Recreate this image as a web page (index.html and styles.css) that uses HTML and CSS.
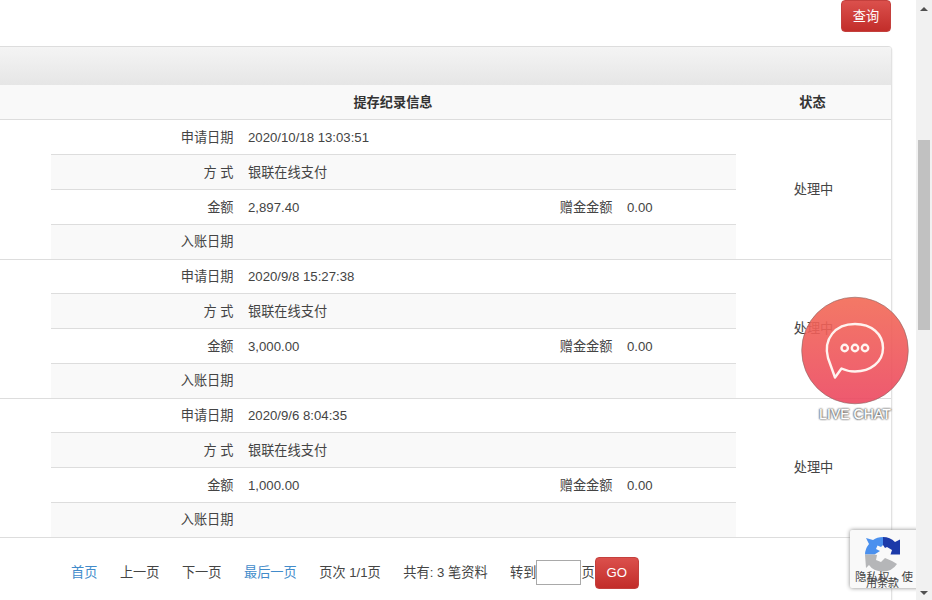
FILE: index.html
```html
<!DOCTYPE html>
<html lang="zh-CN">
<head>
<meta charset="utf-8">
<title>提存纪录</title>
<link rel="stylesheet" href="styles.css">
</head>
<body>
<div class="window">
  <main class="page">
    <div class="toolbar"><button class="btn query">查询</button></div>
    <section class="panel">
      <div class="panel-heading"></div>
      <div class="table-head"><span class="info-title">提存纪录信息</span><span class="status-title">状态</span></div>
      <div class="record">
        <div class="details">
          <div class="row"><span class="label">申请日期</span><span class="value">2020/10/18 13:03:51</span></div>
          <div class="row"><span class="label">方 式</span><span class="value">银联在线支付</span></div>
          <div class="row"><span class="label">金额</span><span class="value">2,897.40</span><span class="label bonus">赠金金额</span><span class="value amount">0.00</span></div>
          <div class="row"><span class="label">入账日期</span></div>
        </div>
        <div class="status">处理中</div>
      </div>
      <div class="record">
        <div class="details">
          <div class="row"><span class="label">申请日期</span><span class="value">2020/9/8 15:27:38</span></div>
          <div class="row"><span class="label">方 式</span><span class="value">银联在线支付</span></div>
          <div class="row"><span class="label">金额</span><span class="value">3,000.00</span><span class="label bonus">赠金金额</span><span class="value amount">0.00</span></div>
          <div class="row"><span class="label">入账日期</span></div>
        </div>
        <div class="status">处理中</div>
      </div>
      <div class="record">
        <div class="details">
          <div class="row"><span class="label">申请日期</span><span class="value">2020/9/6 8:04:35</span></div>
          <div class="row"><span class="label">方 式</span><span class="value">银联在线支付</span></div>
          <div class="row"><span class="label">金额</span><span class="value">1,000.00</span><span class="label bonus">赠金金额</span><span class="value amount">0.00</span></div>
          <div class="row"><span class="label">入账日期</span></div>
        </div>
        <div class="status">处理中</div>
      </div>
      <div class="pager">
        <a>首页</a><span>上一页</span><span>下一页</span><a>最后一页</a><span>页次 1/1页</span><span>共有: 3 笔资料</span>
        <div class="jump"><span>转到</span><input type="text" class="page-input"><span>页</span><button class="btn go">GO</button></div>
      </div>
    </section>
    <div class="chat">
      <svg class="chat-icon" width="112" height="112" viewBox="0 0 112 112">
        <defs><linearGradient id="coral" x1="0" y1="0" x2="0" y2="1"><stop offset="0" stop-color="#f26a55"/><stop offset="1" stop-color="#ec4760"/></linearGradient></defs>
        <circle cx="56" cy="56.500" r="53.300" fill="url(#coral)" fill-opacity=".9" stroke="#8b6864" stroke-opacity=".6" stroke-width="1"/>
        <g fill="none" stroke="#fff3ef" stroke-width="2.400" stroke-linejoin="round">
          <path d="M36 83.500L29 64C24 45 36 30 56 30C72.500 30 84 40 84 54C84 68 71.500 77.500 56 77.500C51 77.500 46.500 76.500 42.500 74.500Z"/>
          <circle cx="45.700" cy="54" r="3.200"/><circle cx="56" cy="54" r="3.200"/><circle cx="66" cy="54" r="3.200"/>
        </g>
      </svg>
      <div class="chat-label">LIVE CHAT</div>
    </div>
    <div class="captcha">
      <svg class="captcha-logo" width="36" height="36" viewBox="0 0 36 36">
        <path fill="#4a90ee" d="M18 0V8L16 10L12.500 8.500L11 12L15 14L9.500 17.500H0Q0 12 4 7L1 1L8 3Q12 0 18 0Z"/>
        <path fill="#1c3aa9" d="M18 0Q25 0 30 5L35 2.500V17.500H25.500L27 13L22 10L20 11L18 8Z"/>
        <path fill="#b5b6b8" d="M0 17.500H9.500L12 18L11 23L16 25L20 21L27 24L32 27Q27 34.500 18 34.500Q8 34 4 28L1 31Z"/>
      </svg>
      <span class="privacy">隐私权<span class="dash">-</span>使</span><span class="terms">用条款</span>
    </div>
  </main>
  <aside class="scrollbar"><i class="arrow up"></i><i class="thumb"></i><i class="arrow down"></i></aside>
</div>
</body>
</html>
```

FILE: styles.css
```css
* { box-sizing: border-box; }
body { margin: 0; overflow: hidden; background: #fff; color: #444; font: 13.2px/18px "Liberation Sans", "Noto Sans CJK SC", sans-serif; }
.window { display: flex; width: 932px; height: 600px; overflow: hidden; }
.page { position: relative; flex: 1; height: 600px; overflow: hidden; }
.toolbar { display: flex; justify-content: flex-end; height: 46px; padding-right: 25px; }
.btn { height: 32px; padding: 0; border: 1px solid #c4403d; border-radius: 4px; background: linear-gradient(#db504c, #c22d2a); color: #fff; font: inherit; }
.query { width: 50px; padding-top: 1px; }
.panel { width: 892px; height: 554px; border-top: 1px solid #ddd; border-right: 1px solid #e2e2e2; border-radius: 0 4px 0 0; box-shadow: 1px 1px 1px rgba(0, 0, 0, .04); }
.panel-heading { height: 38px; border-radius: 0 3px 0 0; background: linear-gradient(#f4f4f4, #e6e6e6); }
.table-head { display: grid; grid-template-columns: 51px 684px 155px; height: 34px; background: #f9f9f9; color: #333; font-weight: bold; line-height: 36px; text-align: center; }
.info-title { grid-column: 2; }
.record { display: grid; grid-template-columns: 685px 155px; height: 139px; padding-left: 51px; border-top: 1px solid #ddd; }
.table-head + .record { height: 140px; }
.table-head + .record .row:first-child { height: 34px; line-height: 36px; }
.row { display: flex; height: 35px; border-top: 1px solid #ddd; line-height: 36px; }
.row:first-child { height: 33px; border-top: 0; line-height: 34px; }
.row:nth-child(even) { background: #f9f9f9; }
.row:last-child { line-height: 34px; }
.label { flex: none; width: 182.500px; text-align: right; }
.value { flex: none; width: 183px; padding-left: 14.500px; }
.bonus { width: 196px; }
.amount { width: auto; }
.status { display: flex; align-items: center; justify-content: center; }
.pager { display: flex; align-items: center; gap: 22.500px; height: 63px; padding: 7px 0 0 71px; border-top: 1px solid #ddd; white-space: nowrap; }
.pager a { color: #428bca; }
.jump { display: flex; align-items: center; }
.page-input { width: 45px; height: 25px; padding: 0 3px; margin-top: -1px; border: 1px solid #a9a9a9; background: #fff; }
.go { width: 44px; }
.chat { position: absolute; left: 799px; top: 294px; width: 112px; }
.chat-icon { display: block; }
.chat-label { margin-top: -1px; color: #fff; font-size: 14px; letter-spacing: .05px; text-align: center; text-shadow: 0 0 2px #555, 0 0 2px #555, 0 0 2px #666, 0 0 1px #777; -webkit-text-stroke: .3px #fff; }
.captcha { position: absolute; left: 850px; top: 530px; width: 70px; height: 58px; border-radius: 2px; background: #f9f9f9; box-shadow: 0 0 4px #888; }
.captcha-logo { position: absolute; left: 15px; top: 7px; }
.privacy, .terms { position: absolute; color: #444; line-height: 14px; white-space: nowrap; }
.privacy { left: 5px; top: 40px; font-size: 11.500px; }
.dash { display: inline-block; width: 12px; text-align: center; }
.terms { left: 16px; top: 46px; font-size: 11px; }
.scrollbar { display: flex; flex-direction: column; align-items: center; width: 16px; height: 600px; padding: 3px 0 1px; background: #f1f1f1; }
.arrow { border: 4px solid transparent; }
.up { border-bottom-color: #505050; }
.down { margin-top: auto; border-top-color: #505050; }
.thumb { width: 12px; height: 190px; margin-top: 129px; background: #c1c1c1; }
```
